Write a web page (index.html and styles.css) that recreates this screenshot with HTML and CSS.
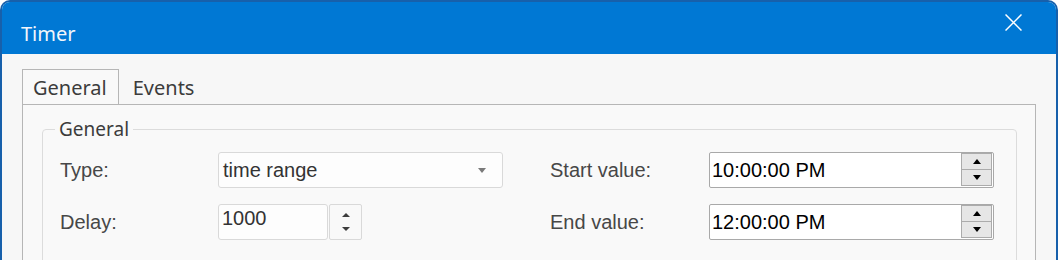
FILE: index.html
```html
<!DOCTYPE html>
<html>
<head>
<meta charset="utf-8">
<link rel="stylesheet" href="styles.css">
</head>
<body>
<div class="window">
  <div class="titlebar">
    <span class="title">Timer</span>
    <span class="close" aria-label="Close">
      <svg width="17" height="17" viewBox="0 0 17 17"><path d="M0.5 0.5 L16.5 16.5 M16.5 0.5 L0.5 16.5" stroke="#ffffff" stroke-width="1.5" fill="none"/></svg>
    </span>
  </div>
  <div class="content">
    <div class="tabs">
      <div class="tab active">General</div>
      <div class="tab">Events</div>
    </div>
    <div class="pane">
      <fieldset class="group">
        <legend>General</legend>
        <div class="grid">
          <div class="label">Type:</div>
          <div class="combo"><span>time range</span><span class="caret"></span></div>
          <div class="label label-right">Start value:</div>
          <div class="timebox"><span class="tval">10:00:00 PM</span><span class="spin"><span class="sb"><i class="up"></i></span><span class="sb"><i class="down"></i></span></span></div>

          <div class="label">Delay:</div>
          <div class="numwrap"><div class="num">1000</div><div class="numspin"><i class="up small"></i><i class="down small"></i></div></div>
          <div class="label label-right">End value:</div>
          <div class="timebox"><span class="tval">12:00:00 PM</span><span class="spin"><span class="sb"><i class="up"></i></span><span class="sb"><i class="down"></i></span></span></div>
        </div>
      </fieldset>
    </div>
  </div>
</div>
</body>
</html>
```
FILE: styles.css
```css
html, body {
  margin: 0;
  padding: 0;
  background: #ffffff;
}
body {
  width: 1058px;
  height: 260px;
  overflow: hidden;
}
.window {
  box-sizing: border-box;
  width: 1058px;
  height: 262px;
  border: 2px solid #1760ab;
  border-bottom: none;
  border-radius: 10px 10px 0 0;
  background: #f7f7f7;
  overflow: hidden;
}
.titlebar {
  box-sizing: border-box;
  height: 52px;
  background: #0078d4;
  display: flex;
  justify-content: space-between;
  align-items: flex-start;
  padding: 0 34px 0 19px;
}
.title {
  font-family: "Noto Sans", "Open Sans", sans-serif;
  font-size: 20px;
  line-height: 27px;
  color: #f2f6fb;
  margin-top: 18px;
}
.close {
  display: block;
  width: 17px;
  height: 17px;
  margin-top: 12px;
}
.close svg { display: block; }
.content {
  padding: 15px 0 0 20px;
}
.tabs {
  display: flex;
  font-family: "Noto Sans", "Open Sans", sans-serif;
  font-size: 20px;
  line-height: 27px;
  color: #3c3c3c;
}
.tab {
  box-sizing: border-box;
  height: 35px;
  padding: 4px 11px 0 10px;
  border: 1px solid transparent;
  border-bottom: none;
}
.tab + .tab {
  padding-left: 13px;
}
.tab.active {
  border-color: #b6b6b6;
  background: #f9f9f9;
  margin-bottom: -1px;
  position: relative;
  z-index: 1;
}
.pane {
  box-sizing: border-box;
  width: 1014px;
  height: 200px;
  border: 1px solid #b6b6b6;
  background: #f9f9f9;
  padding: 11px 0 0 19px;
}
.group {
  margin: 0;
  width: 975px;
  box-sizing: border-box;
  height: 180px;
  border: 1px solid #dcdcdc;
  border-radius: 4px;
  padding: 0 0 0 17px;
}
.group legend {
  font-family: "Noto Sans", "Open Sans", sans-serif;
  font-size: 19px;
  line-height: 26px;
  color: #3c3c3c;
  padding: 0 4px;
  margin-left: -5px;
}
.grid {
  display: grid;
  grid-template-columns: 158px 285px 206px 285px;
  grid-auto-rows: 36px;
  row-gap: 16px;
  align-items: center;
  margin-top: 10px;
  font-family: "Liberation Sans", Arial, sans-serif;
  font-size: 20px;
}
.label {
  color: #474747;
}
.label-right {
  padding-left: 47px;
}
.combo {
  box-sizing: border-box;
  height: 36px;
  border: 1px solid #d9d9d9;
  border-radius: 3px;
  background: #fdfdfd;
  display: flex;
  align-items: center;
  justify-content: space-between;
  padding: 0 16px 0 4px;
  color: #333333;
}
.caret {
  width: 0;
  height: 0;
  border-left: 4px solid transparent;
  border-right: 4px solid transparent;
  border-top: 5px solid #7a7a7a;
}
.numwrap {
  display: flex;
  gap: 1px;
  height: 36px;
}
.num {
  box-sizing: border-box;
  width: 110px;
  height: 36px;
  border: 1px solid #d9d9d9;
  border-radius: 3px;
  background: #fdfdfd;
  padding: 0 0 0 3px;
  line-height: 26px;
  color: #333333;
}
.numspin {
  box-sizing: border-box;
  width: 33px;
  height: 36px;
  border: 1px solid #d9d9d9;
  border-radius: 2px;
  background: #f9f9f9;
  display: flex;
  flex-direction: column;
  align-items: center;
  justify-content: center;
  gap: 10px;
}
.timebox {
  box-sizing: border-box;
  height: 36px;
  border: 1px solid #a9a9a9;
  border-radius: 2px;
  background: #ffffff;
  display: flex;
  align-items: center;
  justify-content: space-between;
  padding: 0 1px 0 2px;
  color: #000000;
}
.spin {
  display: flex;
  flex-direction: column;
  width: 31px;
  align-self: stretch;
  padding: 0 0 1px 0;
}
.sb {
  box-sizing: border-box;
  flex: 1;
  display: flex;
  align-items: center;
  justify-content: center;
  background: #e6e6e6;
  border: 1px solid #ababab;
}
.sb + .sb {
  border-top: none;
}
i.up, i.down {
  display: block;
  width: 0;
  height: 0;
  border-left: 4px solid transparent;
  border-right: 4px solid transparent;
}
i.up { border-bottom: 5px solid #000000; }
i.down { border-top: 5px solid #000000; }
i.small.up { border-bottom-color: #3d3d3d; border-bottom-width: 4px; }
i.small.down { border-top-color: #3d3d3d; border-top-width: 4px; }
```
